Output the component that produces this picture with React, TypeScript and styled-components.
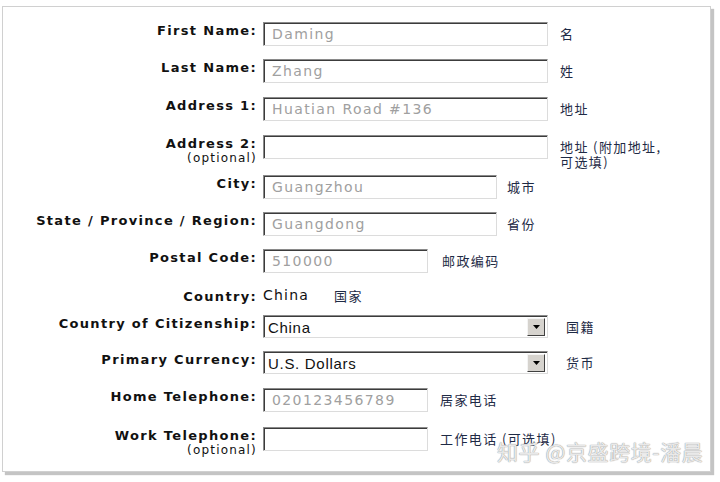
import React from "react";
import styled, { createGlobalStyle } from "styled-components";

const Global = createGlobalStyle`
  html, body { margin: 0; padding: 0; background: #ffffff; }
  body { width: 720px; height: 482px; overflow: hidden; }
`;

const Panel = styled.div`
  position: relative;
  box-sizing: border-box;
  margin: 6px 0 0 2px;
  width: 709px;
  height: 466px;
  border: 1px solid #d0d0d0;
  box-shadow: 3px 3px 1px #c4c4c4;
  background: #fff;
  padding-top: 15px;
  display: flex;
  flex-direction: column;
`;

const Row = styled.div<{ $h: number }>`
  display: flex;
  align-items: flex-start;
  height: ${(p) => p.$h}px;
`;

const LabelCell = styled.div`
  box-sizing: border-box;
  width: 260px;
  padding-right: 6px;
  text-align: right;
  font-family: "DejaVu Sans", Verdana, sans-serif;
  color: #111;
  display: flex;
  flex-direction: column;
  align-items: flex-end;
`;

const LabelText = styled.span<{ $top?: number }>`
  font-weight: bold;
  font-size: 13px;
  letter-spacing: 1.32px;
  line-height: 15px;
  margin-top: ${(p) => p.$top ?? 1}px;
  white-space: nowrap;
`;

const Optional = styled.span`
  font-size: 12px;
  letter-spacing: 1.2px;
  line-height: 15px;
  white-space: nowrap;
`;

const TextBox = styled.div<{ $w: number }>`
  box-sizing: border-box;
  width: ${(p) => p.$w}px;
  height: 24px;
  border-top: 1px solid #8a8a8a;
  border-left: 1px solid #8a8a8a;
  border-right: 1px solid #dcdcdc;
  border-bottom: 1px solid #dcdcdc;
  box-shadow: inset 1px 1px 0 #3c3c3c;
  padding: 1px 0 0 8px;
  font-family: "DejaVu Sans", Verdana, sans-serif;
  font-size: 14px;
  letter-spacing: 1.4px;
  line-height: 21px;
  color: #a0a0a0;
  white-space: nowrap;
  overflow: hidden;
`;

const SelectBox = styled.div`
  box-sizing: border-box;
  width: 285px;
  height: 23px;
  border-top: 1px solid #8a8a8a;
  border-left: 1px solid #8a8a8a;
  border-right: 1px solid #dcdcdc;
  border-bottom: 1px solid #dcdcdc;
  box-shadow: inset 1px 1px 0 #3c3c3c;
  display: flex;
  align-items: stretch;
  padding: 2px 2px 1px 2px;
`;

const SelectValue = styled.div`
  flex: 1;
  padding-left: 2px;
  font-family: "Liberation Sans", Arial, sans-serif;
  font-size: 15px;
  letter-spacing: 0.7px;
  line-height: 19px;
  color: #111;
  white-space: nowrap;
`;

const DropButton = styled.div`
  box-sizing: border-box;
  width: 18px;
  background: #d6d3ce;
  border-top: 1px solid #f4f4f4;
  border-left: 1px solid #f4f4f4;
  border-right: 1px solid #404040;
  border-bottom: 1px solid #404040;
  display: flex;
  align-items: center;
  justify-content: center;
`;

const Plain = styled.span`
  font-family: "DejaVu Sans", Verdana, sans-serif;
  font-size: 14px;
  letter-spacing: 1.2px;
  line-height: 17px;
  color: #111;
  width: 71px;
`;

const Cn = styled.div<{ $gap: number; $top?: number }>`
  margin-left: ${(p) => p.$gap}px;
  margin-top: ${(p) => p.$top ?? 4}px;
  font-family: "Noto Sans CJK SC", "DejaVu Sans", sans-serif;
  font-size: 13px;
  letter-spacing: 1.4px;
  line-height: 15px;
  color: #1e2a45;
  white-space: nowrap;
`;

const Watermark = styled.div`
  position: absolute;
  left: 494px;
  top: 429px;
  font-family: "Noto Sans CJK SC", sans-serif;
  font-size: 21px;
  letter-spacing: 0.6px;
  color: rgba(255, 255, 255, 0.8);
  text-shadow: 0 0 1px #9a9a9a, 0 0 1px #9a9a9a;
  white-space: nowrap;
  pointer-events: none;
`;

const Arrow = () => (
  <svg width="7" height="4" viewBox="0 0 7 4">
    <path d="M0 0H7L3.5 4Z" fill="#000" />
  </svg>
);

type Field = {
  label: string;
  optional?: boolean;
  kind: "text" | "select" | "plain";
  value: string;
  w?: number;
  cn: React.ReactNode;
  gap: number;
  h: number;
  cnTop?: number;
};

const fields: Field[] = [
  { label: "First Name:", kind: "text", value: "Daming", w: 285, cn: "名", gap: 12, h: 37 },
  { label: "Last Name:", kind: "text", value: "Zhang", w: 285, cn: "姓", gap: 12, h: 38 },
  { label: "Address 1:", kind: "text", value: "Huatian Road #136", w: 285, cn: "地址", gap: 12, h: 38 },
  {
    label: "Address 2:",
    optional: true,
    kind: "text",
    value: "",
    w: 285,
    cn: (
      <>
        地址 (附加地址,
        <br />
        可选填)
      </>
    ),
    gap: 12,
    h: 40,
    cnTop: 4,
  },
  { label: "City:", kind: "text", value: "Guangzhou", w: 234, cn: "城市", gap: 10, h: 37 },
  { label: "State / Province / Region:", kind: "text", value: "Guangdong", w: 234, cn: "省份", gap: 10, h: 37 },
  { label: "Postal Code:", kind: "text", value: "510000", w: 165, cn: "邮政编码", gap: 14, h: 38 },
  { label: "Country:", kind: "plain", value: "China", cn: "国家", gap: 0, h: 28, cnTop: 1 },
  { label: "Country of Citizenship:", kind: "select", value: "China", cn: "国籍", gap: 18, h: 36 },
  { label: "Primary Currency:", kind: "select", value: "U.S. Dollars", cn: "货币", gap: 18, h: 37 },
  { label: "Home Telephone:", kind: "text", value: "020123456789", w: 165, cn: "居家电话", gap: 12, h: 39 },
  { label: "Work Telephone:", optional: true, kind: "text", value: "", w: 165, cn: "工作电话 (可选填)", gap: 12, h: 40 },
];

export default function App() {
  return (
    <>
      <Global />
      <Panel>
        {fields.map((f) => (
          <Row key={f.label} $h={f.h}>
            <LabelCell>
              <LabelText $top={f.kind === "plain" ? 2 : 1}>{f.label}</LabelText>
              {f.optional && <Optional>(optional)</Optional>}
            </LabelCell>
            {f.kind === "text" && <TextBox $w={f.w!}>{f.value}</TextBox>}
            {f.kind === "select" && (
              <SelectBox>
                <SelectValue>{f.value}</SelectValue>
                <DropButton>
                  <Arrow />
                </DropButton>
              </SelectBox>
            )}
            {f.kind === "plain" && <Plain>{f.value}</Plain>}
            <Cn $gap={f.gap} $top={f.cnTop}>
              {f.cn}
            </Cn>
          </Row>
        ))}
        <Watermark>知乎 @京盛跨境-潘晨</Watermark>
      </Panel>
    </>
  );
}
